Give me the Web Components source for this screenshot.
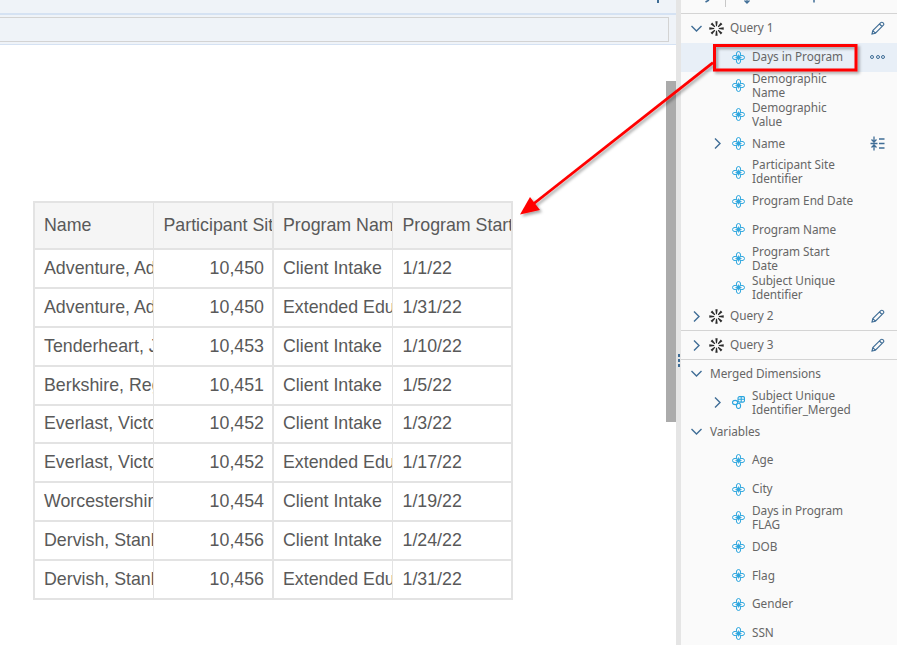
<!DOCTYPE html>
<html>
<head>
<meta charset="utf-8">
<title>Query panel</title>
<style>
  html, body { margin: 0; height: 100%; overflow: hidden; background: #fff; }
  body { font-family: "Liberation Sans", Arial, sans-serif; }
</style>
</head>
<body>
<report-app></report-app>

<script>
const LOBE_T = '<ellipse cx="6.500" cy="3.100" rx="2.100" ry="2.600"/>';
const LOBE_B = '<ellipse cx="6.500" cy="9.900" rx="2.100" ry="2.600"/>';
const LOBE_L = '<ellipse cx="3.100" cy="6.500" rx="2.600" ry="2.100"/>';
const LOBE_R = '<ellipse cx="9.900" cy="6.500" rx="2.600" ry="2.100"/>';
const WEDGES = [0, 45, 90, 135, 180, 225, 270, 315]
  .map((a) => `<path d="M6.350 .3 8.650 .3 8 5.200 7 5.200Z" transform="rotate(${a} 7.500 7.500)"/>`)
  .join("");
const ICONS = {
  down: '<path d="M.5 3 5.500 8 10.500 3" fill="none" stroke="#3f6d96" stroke-width="1.4"/>',
  right: '<path d="M3 .5 8 5.500 3 10.500" fill="none" stroke="#3f6d96" stroke-width="1.4"/>',
  query: `<g fill="#2b2b2b">${WEDGES}</g>`,
  pencil: '<path d="M1 13 1.800 9.600 9.800 1.600a1.400 1.400 0 0 1 2 0l.6.6a1.400 1.400 0 0 1 0 2L4.400 12.200ZM8.500 3l2.500 2.500M1.800 9.600l2.600 2.600" fill="none" stroke="#3f6d96" stroke-width="1.1"/>',
  dim: `<g fill="none" stroke="#2aa5de" stroke-width="1">
      ${LOBE_T}${LOBE_B}${LOBE_L}${LOBE_R}
      <path d="M3.500 6.500h6M6.500 3.500v6" stroke-width=".9"/></g>`,
  merged: `<g fill="none" stroke="#2aa5de" stroke-width="1.1">
      ${LOBE_B}${LOBE_L}
      <rect x="6" y=".6" width="6.500" height="5.500" rx="1.500"/><path d="M9.200 .6v5.500M6 3.300h6.500"/></g>`,
  collapse: `<g fill="none" stroke="#3f6d96" stroke-width="1.300">
      <path d="M4 .5v5M1.500 3.500 4 6l2.500-2.500M4 14.500v-5M1.500 11.500 4 9l2.500 2.500M.5 7.500h7M9 3h5.500M9 7.500h5.500M9 12h5.500"/></g>`
};

function icon(name, w, h) {
  return `<svg width="${w}" height="${h}" viewBox="0 0 ${w} ${h}">${ICONS[name]}</svg>`;
}

class TreeRow extends HTMLElement {
  constructor() {
    super();
    this.attachShadow({ mode: "open" });
    const caret = this.getAttribute("caret");
    const type = this.getAttribute("type");
    const action = this.getAttribute("action");
    let typeIcon = "";
    if (type === "query") typeIcon = icon("query", 15, 15);
    if (type === "dim") typeIcon = icon("dim", 13, 13);
    if (type === "merged") typeIcon = icon("merged", 13, 13);
    let actionIcon = "";
    if (action === "pencil") actionIcon = icon("pencil", 14, 14);
    if (action === "collapse") actionIcon = icon("collapse", 15, 15);
    if (action === "more") actionIcon = '<span class="dots"><i></i><i></i><i></i></span>';
    this.shadowRoot.innerHTML = `
      <style>
        :host {
          display: flex;
          align-items: center;
          height: 28.8px;
          box-sizing: border-box;
          color: #666;
          font-size: 11.8px;
          letter-spacing: -0.05px;
          line-height: 14px;
          padding-right: 12px;
        }
        :host([selected]) { background: #e8eff7; }
        :host([divider]) { box-shadow: inset 0 -1px 0 #d4d4d4; }
        .caret { width: 11px; display: flex; justify-content: center; flex: none; }
        .caret svg { display: block; }
        :host([level="head"]) { padding-left: 10px; }
        :host([level="head"]) .caret { margin-right: 7px; }
        :host([level="head"]) .glyph { width: 15px; margin-right: 6px; }
        :host([level="field"]) { padding-left: 31px; }
        :host([level="field"]) .caret { margin-right: 9px; }
        :host([level="field"]) .glyph { width: 13px; margin-right: 7px; }
        :host([level="group"]) { padding-left: 10px; }
        :host([level="group"]) .caret { margin-right: 8px; }
        .glyph { flex: none; display: flex; }
        .label { flex: 1; min-width: 0; padding-bottom: 2px; }
        :host([level="field"]) .label { max-width: 105px; }
        .action { margin-left: auto; width: 15px; display: flex; justify-content: center; flex: none; }
        .dots { display: flex; gap: 1.500px; }
        .dots i { width: 2px; height: 2px; border: 1px solid #3f6d96; border-radius: 50%; }
      </style>
      <span class="caret">${caret ? icon(caret, 11, 11) : ""}</span>
      ${typeIcon ? `<span class="glyph">${typeIcon}</span>` : ""}
      <span class="label"><slot></slot></span>
      ${actionIcon ? `<span class="action">${actionIcon}</span>` : ""}
    `;
  }
}

class SidePanel extends HTMLElement {
  constructor() {
    super();
    this.attachShadow({ mode: "open" });
    this.shadowRoot.innerHTML = `
      <style>
        :host {
          display: block;
          flex: 1;
          min-width: 0;
          background: #fafafa;
          overflow: hidden;
          font-family: "Noto Sans", "Open Sans", sans-serif;
        }
        .tools {
          height: 14px;
          box-sizing: border-box;
          border-bottom: 1px solid #d4d4d4;
          display: flex;
          align-items: flex-start;
          overflow: hidden;
        }
        .tools svg { display: block; flex: none; }
        .sep { width: 1px; height: 7px; background: #c8c8c8; margin: 0 13px 0 15px; }
      </style>
      <div class="tools">
        <svg width="10" height="7" viewBox="0 0 10 7" style="margin-left:19px"><path d="M9 0 5.500 2" fill="none" stroke="#3f6d96" stroke-width="1.500"/></svg>
        <span class="sep"></span>
        <svg width="10" height="7" viewBox="0 0 10 7" style="margin-left:3px"><path d="M5 0v2M2.500 .5 5 3l2.500-2.500" fill="none" stroke="#3f6d96" stroke-width="1.300"/></svg>
        <svg width="4" height="7" viewBox="0 0 4 7" style="margin-left:60px"><path d="M2 0v2.500" stroke="#3f6d96" stroke-width="1.500"/></svg>
      </div>
      <slot></slot>
    `;
  }
}

class DataGrid extends HTMLElement {
  constructor() {
    super();
    this.attachShadow({ mode: "open" });
    const head = ["Name", "Participant Site Identifier", "Program Name", "Program Start Date"];
    const rows = [
      ["Adventure, Adam", "10,450", "Client Intake", "1/1/22"],
      ["Adventure, Adam", "10,450", "Extended Education", "1/31/22"],
      ["Tenderheart, Jane", "10,453", "Client Intake", "1/10/22"],
      ["Berkshire, Reginald", "10,451", "Client Intake", "1/5/22"],
      ["Everlast, Victor", "10,452", "Client Intake", "1/3/22"],
      ["Everlast, Victor", "10,452", "Extended Education", "1/17/22"],
      ["Worcestershire, Paul", "10,454", "Client Intake", "1/19/22"],
      ["Dervish, Stanley", "10,456", "Client Intake", "1/24/22"],
      ["Dervish, Stanley", "10,456", "Extended Education", "1/31/22"]
    ];
    this.shadowRoot.innerHTML = `
      <style>
        :host {
          display: grid;
          align-self: flex-start;
          grid-template-columns: repeat(4, 118px);
          grid-template-rows: 45.500px repeat(4, 37.500px) 36.500px repeat(4, 37.500px);
          gap: 1.500px;
          width: 479.500px;
          box-sizing: border-box;
          background: #e3e3e3;
          padding: 1.500px;
          font-family: "Liberation Sans", Arial, sans-serif;
          font-size: 17.800px;
          color: #595959;
        }
        div {
          background: #fff;
          padding: 0 0 0 9.500px;
          overflow: hidden;
          white-space: nowrap;
          display: flex;
          align-items: center;
        }
        .head { background: #f5f5f5; }
        .num { justify-content: flex-end; padding: 0 8px 0 0; }
      </style>
      ${head.map((h) => `<div class="head">${h}</div>`).join("")}
      ${rows
        .map(
          (r) => `
        <div>${r[0]}</div>
        <div class="num">${r[1]}</div>
        <div>${r[2]}</div>
        <div>${r[3]}</div>`
        )
        .join("")}
    `;
  }
}

class CalloutLayer extends HTMLElement {
  constructor() {
    super();
    this.attachShadow({ mode: "open" });
    this.shadowRoot.innerHTML = `
      <style>
        :host { position: absolute; inset: 0; pointer-events: none; display: block; }
        svg { position: absolute; left: 0; top: 0; }
      </style>
      <svg width="897" height="645" viewBox="0 0 897 645">
        <defs>
          <filter id="soft" x="-10%" y="-10%" width="130%" height="130%">
            <feDropShadow dx="2" dy="2" stdDeviation="1.800" flood-color="#000" flood-opacity=".35"/>
          </filter>
        </defs>
        <g filter="url(#soft)">
          <rect x="714.500" y="45.500" width="141.500" height="24.500" fill="none" stroke="#f00" stroke-width="3"/>
          <path d="M713 62.700 532 205" stroke="#f00" stroke-width="2.800" fill="none"/>
          <path d="M520 214.500 530 197 540 210Z" fill="#f00"/>
        </g>
      </svg>
    `;
  }
}

class ReportApp extends HTMLElement {
  constructor() {
    super();
    this.attachShadow({ mode: "open" });
    this.shadowRoot.innerHTML = `
      <style>
        :host { display: flex; position: relative; width: 897px; height: 645px; overflow: hidden; }
        .main { width: 676px; flex: none; display: flex; flex-direction: column; position: relative; }
        .bar {
          height: 15px;
          flex: none;
          box-sizing: border-box;
          background: #eff3f8;
          border-bottom: 2px solid #d5e2f3;
          display: flex;
          justify-content: flex-end;
          padding-right: 17px;
        }
        .bar i { width: 2px; height: 3px; background: #3f6d96; }
        .filter {
          height: 30px;
          flex: none;
          box-sizing: border-box;
          background: #eff3f8;
          border-bottom: 1px solid #d5e2f3;
          padding: 2px 7px 0 0;
        }
        .filter span {
          display: block;
          height: 25px;
          box-sizing: border-box;
          background: #eff3f8;
          border: 1px solid #d3d3d3;
          border-left: 0;
        }
        .canvas { flex: 1; display: flex; position: relative; padding: 156px 0 0 33px; }
        .thumb { position: absolute; right: 0; top: 36px; width: 10px; height: 341px; background: #ababab; }
        .splitter { width: 5px; flex: none; background: #e5e5e5; position: relative; }
        .grip { position: absolute; top: 354px; left: 2px; display: flex; flex-direction: column; gap: 2px; }
        .grip i { width: 2px; height: 3px; background: #3f6d96; display: block; }
      </style>
      <div class="main">
        <div class="bar"><i></i></div>
        <div class="filter"><span></span></div>
        <div class="canvas">
          <data-grid></data-grid>
          <div class="thumb"></div>
        </div>
      </div>
      <div class="splitter"><div class="grip"><i></i><i></i><i></i></div></div>
      <side-panel>
        <tree-row level="head" caret="down" type="query" action="pencil">Query 1</tree-row>
        <tree-row level="field" type="dim" action="more" selected>Days in Program</tree-row>
        <tree-row level="field" type="dim">Demographic Name</tree-row>
        <tree-row level="field" type="dim">Demographic Value</tree-row>
        <tree-row level="field" caret="right" type="dim" action="collapse">Name</tree-row>
        <tree-row level="field" type="dim">Participant Site Identifier</tree-row>
        <tree-row level="field" type="dim">Program End Date</tree-row>
        <tree-row level="field" type="dim">Program Name</tree-row>
        <tree-row level="field" type="dim">Program Start Date</tree-row>
        <tree-row level="field" type="dim">Subject Unique Identifier</tree-row>
        <tree-row level="head" caret="right" type="query" action="pencil" divider>Query 2</tree-row>
        <tree-row level="head" caret="right" type="query" action="pencil" divider>Query 3</tree-row>
        <tree-row level="group" caret="down">Merged Dimensions</tree-row>
        <tree-row level="field" caret="right" type="merged">Subject Unique Identifier_Merged</tree-row>
        <tree-row level="group" caret="down">Variables</tree-row>
        <tree-row level="field" type="dim">Age</tree-row>
        <tree-row level="field" type="dim">City</tree-row>
        <tree-row level="field" type="dim">Days in Program FLAG</tree-row>
        <tree-row level="field" type="dim">DOB</tree-row>
        <tree-row level="field" type="dim">Flag</tree-row>
        <tree-row level="field" type="dim">Gender</tree-row>
        <tree-row level="field" type="dim">SSN</tree-row>
      </side-panel>
      <callout-layer></callout-layer>
    `;
  }
}

customElements.define("tree-row", TreeRow);
customElements.define("side-panel", SidePanel);
customElements.define("data-grid", DataGrid);
customElements.define("callout-layer", CalloutLayer);
customElements.define("report-app", ReportApp);
</script>
</body>
</html>
